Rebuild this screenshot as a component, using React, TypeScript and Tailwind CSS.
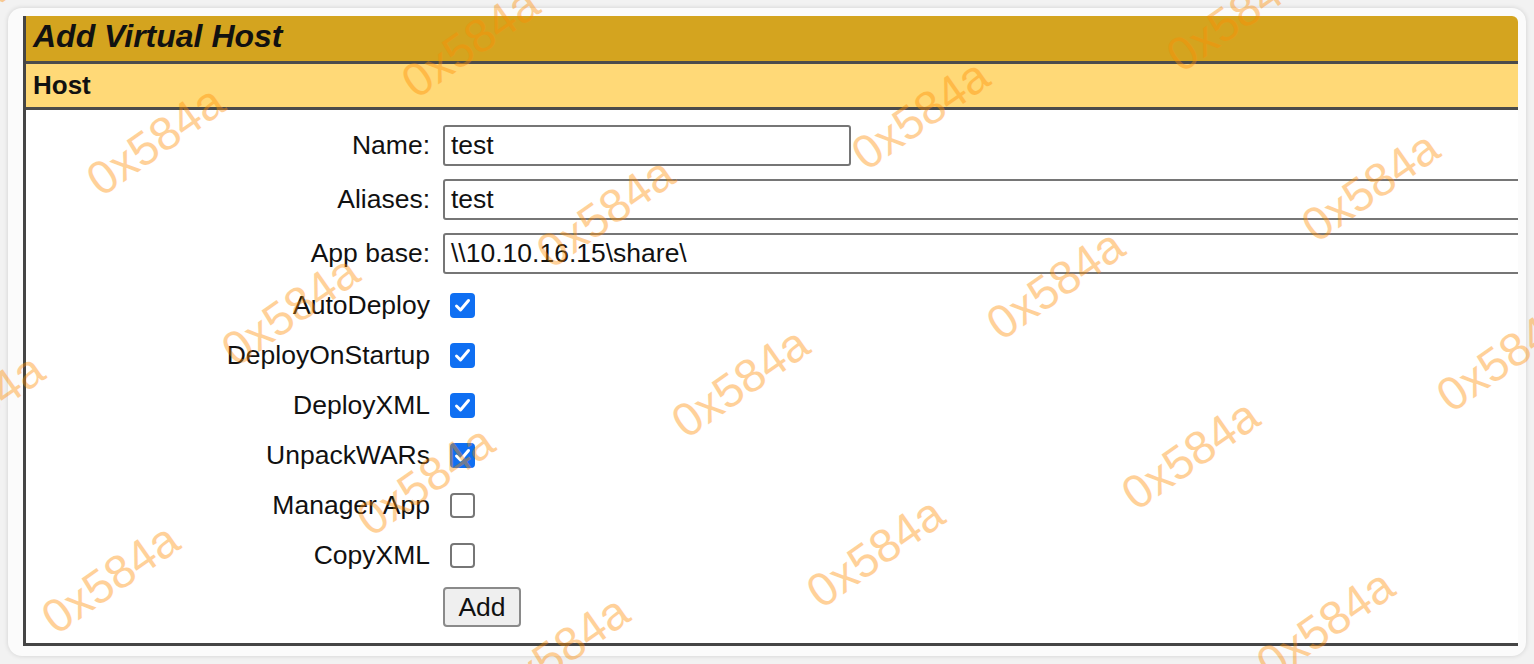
import React from 'react';

const FONT = "font-['Liberation_Sans',Arial,sans-serif]";

// watermark lattice: one row runs along u, the next row is offset by v
const marks: { x: number; y: number }[] = [];
for (let r = -1; r <= 4; r++) {
  for (let c = -2; c <= 2; c++) {
    marks.push({ x: 470 + c * 450 + r * 135, y: 42 + c * 72 + r * 170 });
  }
}

const flags = [
  { label: 'AutoDeploy', checked: true },
  { label: 'DeployOnStartup', checked: true },
  { label: 'DeployXML', checked: true },
  { label: 'UnpackWARs', checked: true },
  { label: 'Manager App', checked: false },
  { label: 'CopyXML', checked: false },
];

function Checkbox({ checked }: { checked: boolean }) {
  if (!checked) {
    return <span className="ml-[7px] block h-[25px] w-[25px] rounded-[4px] border-2 border-[#767676] bg-white" />;
  }
  return (
    <span className="ml-[7px] flex h-[25px] w-[25px] items-center justify-center rounded-[4px] bg-[#0f6ff2]">
      <svg viewBox="0 0 25 25" className="h-[25px] w-[25px]" fill="none" stroke="white" strokeWidth={3} strokeLinecap="round" strokeLinejoin="round">
        <path d="M6.5 13 L10.5 17 L18.5 7.5" />
      </svg>
    </span>
  );
}

export default function App() {
  return (
    <div className={`relative h-[664px] w-[1534px] overflow-hidden bg-[#f2f2f2] p-2 ${FONT} text-[#111]`}>
      {/* frame */}
      <div className="h-full rounded-[14px] bg-[#fbfbfb] pb-[10px] pl-[15px] pr-2 pt-2 shadow-[0_0_5px_rgba(0,0,0,0.14)]">
        <div className="h-full overflow-hidden rounded-tr-[6px] border-b-[3px] border-l-[3px] border-[#454545] bg-white">
          {/* title bar */}
          <div className="flex h-[48px] items-center border-b-[3px] border-[#4b4b4b] bg-[#d4a41f] pb-[5px] pl-[7px]">
            <h1 className="text-[32px] font-bold italic leading-none text-[#111]">Add Virtual Host</h1>
          </div>
          {/* section bar */}
          <div className="flex h-[46px] items-center border-b-[3px] border-[#4b4b4b] bg-[#ffd977] pb-[2px] pl-[7px]">
            <h2 className="text-[26px] font-bold leading-none">Host</h2>
          </div>

          {/* form */}
          <div className="grid grid-cols-[404px_1fr] gap-x-[13px] pt-2 text-[26.5px] leading-none">
            <div className="flex h-[54px] items-center justify-end">Name:</div>
            <div className="flex h-[54px] items-center">
              <div className="flex h-[41px] w-[408px] items-center rounded-[3px] border-2 border-[#767676] pl-[6px]">test</div>
            </div>

            <div className="flex h-[54px] items-center justify-end">Aliases:</div>
            <div className="flex h-[54px] items-center">
              <div className="flex h-[41px] w-[1200px] shrink-0 items-center rounded-[3px] border-2 border-[#767676] pl-[6px]">test</div>
            </div>

            <div className="flex h-[54px] items-center justify-end">App base:</div>
            <div className="flex h-[54px] items-center">
              <div className="flex h-[41px] w-[1200px] shrink-0 items-center rounded-[3px] border-2 border-[#767676] pl-[6px]">
                {'\\\\10.10.16.15\\share\\'}
              </div>
            </div>

            {flags.map((f) => (
              <React.Fragment key={f.label}>
                <div className="flex h-[50px] items-center justify-end">{f.label}</div>
                <div className="flex h-[50px] items-center">
                  <Checkbox checked={f.checked} />
                </div>
              </React.Fragment>
            ))}

            <div className="h-[54px]" />
            <div className="flex h-[54px] items-center">
              <button className="h-[40px] w-[78px] rounded-[4px] border-2 border-[#8a8a8a] bg-[#efefef] text-[26.5px] leading-none">
                Add
              </button>
            </div>
          </div>
        </div>
      </div>

      {/* watermark */}
      <div className="pointer-events-none absolute inset-0">
        {marks.map((m, i) => (
          <span
            key={i}
            style={{ left: m.x, top: m.y }}
            className="absolute -translate-x-1/2 -translate-y-1/2 rotate-[-35deg] whitespace-nowrap text-[47px] leading-none text-[#ff8c00]/40"
          >
            0x584a
          </span>
        ))}
      </div>
    </div>
  );
}
